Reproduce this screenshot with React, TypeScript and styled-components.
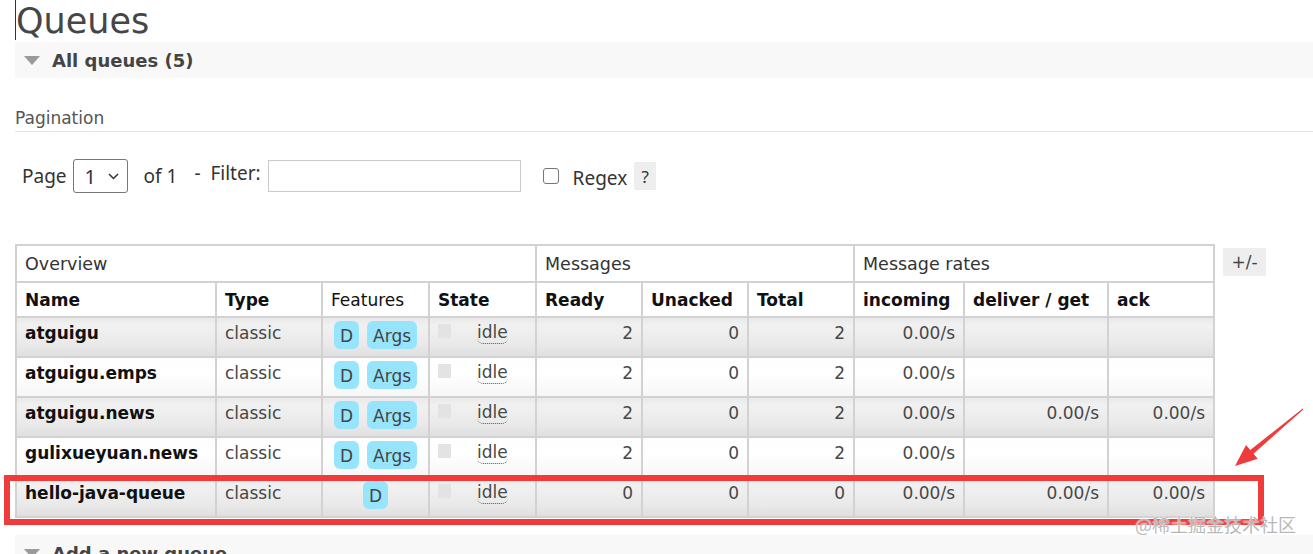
import React from "react";
import styled, { createGlobalStyle } from "styled-components";

const GlobalStyle = createGlobalStyle`
  html, body {
    margin: 0;
    padding: 0;
    background: #ffffff;
  }
  body {
    font-family: "DejaVu Sans", Verdana, sans-serif;
    color: #484848;
    overflow: hidden;
  }
`;

const PageWrapper = styled.div`
  position: relative;
  width: 1313px;
  height: 554px;
  overflow: hidden;
  padding-left: 15px;
  box-sizing: border-box;
`;

const Title = styled.h1`
  margin: 0;
  height: 42px;
  display: flex;
  font-size: 35px;
  line-height: 42px;
  font-weight: normal;
  color: #464646;
`;

const Caret = styled.span`
  width: 1px;
  height: 40px;
  background: #333;
`;

const SectionBar = styled.div`
  height: 36px;
  display: flex;
  align-items: center;
  padding-left: 9px;
  background: #f8f8f8;
  font-size: 18px;
  font-weight: bold;
  color: #444;
`;

const Toggle = styled.span`
  width: 0;
  height: 0;
  border-left: 8px solid transparent;
  border-right: 8px solid transparent;
  border-top: 9px solid #9a9a9a;
  margin-right: 12px;
`;

const SubHeading = styled.h3`
  margin: 30px 0 0;
  padding-bottom: 3px;
  font-size: 17px;
  line-height: 20px;
  font-weight: normal;
  color: #555;
  border-bottom: 1px solid #e2e2e2;
`;

const PagerRow = styled.div`
  display: flex;
  align-items: center;
  height: 34px;
  margin-top: 27px;
  padding-left: 7px;
  font-family: "Noto Sans", "DejaVu Sans", sans-serif;
  font-size: 19px;
  color: #333;
`;

const Label = styled.span<{ $gap?: number; $lift?: number }>`
  margin-left: ${(p) => p.$gap ?? 0}px;
  position: relative;
  top: ${(p) => -(p.$lift ?? 0)}px;
  white-space: pre;
`;

const FakeSelect = styled.div`
  width: 55px;
  height: 34px;
  margin-left: 6px;
  box-sizing: border-box;
  border: 1px solid #767676;
  border-radius: 3px;
  display: flex;
  align-items: center;
  justify-content: space-between;
  padding: 0 8px 0 11px;
  font-size: 20px;
`;

const FilterInput = styled.input`
  width: 253px;
  height: 32px;
  margin: 0 0 0 7px;
  box-sizing: border-box;
  border: 1px solid #cacaca;
  padding: 0 4px;
  outline: none;
`;

const Check = styled.span`
  width: 16px;
  height: 16px;
  margin-left: 22px;
  box-sizing: border-box;
  border: 1.5px solid #767676;
  border-radius: 3px;
  background: #fff;
`;

const HelpBox = styled.span`
  width: 22px;
  height: 28px;
  margin-left: 7px;
  display: flex;
  align-items: center;
  justify-content: center;
  background: #eeeeee;
  font-size: 17px;
  color: #333;
`;

const TableArea = styled.div`
  display: flex;
  align-items: flex-start;
  gap: 8px;
  margin-top: 51px;
  margin-bottom: 17px;
`;

const List = styled.table`
  border-collapse: collapse;
  table-layout: fixed;
  width: 1199px;
  font-size: 17px;
  td,
  th {
    border: 2px solid #d2d2d2;
    box-sizing: border-box;
    overflow: hidden;
    white-space: nowrap;
  }
`;

const GroupHead = styled.th`
  height: 37px;
  padding: 0 8px;
  text-align: left;
  font-size: 17.5px;
  font-weight: normal;
  color: #333;
  background: #fff;
  vertical-align: middle;
`;

const ColHead = styled.th<{ $plain?: boolean }>`
  height: 35px;
  padding: 0 8px;
  text-align: left;
  font-weight: ${(p) => (p.$plain ? "normal" : "bold")};
  color: #111;
  background: #fff;
  vertical-align: middle;
`;

const Row = styled.tr<{ $alt: boolean }>`
  background: ${(p) =>
    p.$alt
      ? "linear-gradient(to bottom, #e8e8e8 0%, #f1f1f1 22%, #e9e9e9 70%, #dfdfdf 100%)"
      : "linear-gradient(to bottom, #fdfdfd 0%, #ffffff 40%, #f6f6f6 100%)"};
`;

const Cell = styled.td<{ $num?: boolean }>`
  height: 40px;
  padding: 4px 8px 0;
  line-height: 22px;
  vertical-align: top;
  text-align: ${(p) => (p.$num ? "right" : "left")};
  color: #484848;
`;

const NameCell = styled(Cell)`
  font-weight: bold;
  color: #111;
`;

const FeatureCell = styled.td`
  height: 40px;
  padding: 3px 0 0;
  vertical-align: top;
`;

const Badges = styled.div`
  display: flex;
  justify-content: center;
  gap: 8px;
`;

const Badge = styled.span`
  height: 28px;
  padding: 2px 6px 0;
  box-sizing: border-box;
  display: flex;
  align-items: center;
  border-radius: 6px;
  background: #97e5fc;
  color: #444;
`;

const StateCell = styled(Cell)`
  padding-left: 8px;
`;

const StateWrap = styled.div`
  display: flex;
  align-items: flex-start;
`;

const StatusSquare = styled.span`
  width: 13px;
  height: 14px;
  margin-top: 2px;
  background: #e3e3e3;
`;

const Status = styled.span`
  margin-left: 26px;
  line-height: 21px;
  border-bottom: 1px dotted #555;
  border-radius: 0 0 6px 6px;
`;

const ToggleColumns = styled.div`
  width: 43px;
  height: 28px;
  margin-top: 4px;
  display: flex;
  align-items: center;
  justify-content: center;
  background: #eeeeee;
  font-size: 17px;
  color: #444;
`;

const Overlay = styled.svg`
  position: absolute;
  left: 0;
  top: 0;
  pointer-events: none;
`;

const Watermark = styled.div`
  position: absolute;
  left: 1135px;
  top: 512px;
  font-family: "Noto Sans CJK SC", "Noto Sans", sans-serif;
  font-size: 18px;
  line-height: 24px;
  color: rgba(160, 160, 160, 0.75);
  text-shadow: 0 0 1px #fff, 0 0 2px #fff;
  pointer-events: none;
`;

type Queue = {
  name: string;
  args: boolean;
  ready: number;
  unacked: number;
  total: number;
  incoming: string;
  deliver: string;
  ack: string;
};

const queues: Queue[] = [
  { name: "atguigu", args: true, ready: 2, unacked: 0, total: 2, incoming: "0.00/s", deliver: "", ack: "" },
  { name: "atguigu.emps", args: true, ready: 2, unacked: 0, total: 2, incoming: "0.00/s", deliver: "", ack: "" },
  { name: "atguigu.news", args: true, ready: 2, unacked: 0, total: 2, incoming: "0.00/s", deliver: "0.00/s", ack: "0.00/s" },
  { name: "gulixueyuan.news", args: true, ready: 2, unacked: 0, total: 2, incoming: "0.00/s", deliver: "", ack: "" },
  { name: "hello-java-queue", args: false, ready: 0, unacked: 0, total: 0, incoming: "0.00/s", deliver: "0.00/s", ack: "0.00/s" },
];

const colWidths = [200, 106, 107, 107, 106, 106, 106, 110, 144, 106];

export default function App() {
  return (
    <PageWrapper>
      <GlobalStyle />
      <Title>
        <Caret />
        Queues
      </Title>
      <SectionBar>
        <Toggle />
        All queues (5)
      </SectionBar>

      <SubHeading>Pagination</SubHeading>
      <PagerRow>
        <Label>Page</Label>
        <FakeSelect>
          <span>1</span>
          <svg width="11" height="7" viewBox="0 0 11 7">
            <polyline points="1,1 5.5,5.5 10,1" fill="none" stroke="#333" strokeWidth="1.5" />
          </svg>
        </FakeSelect>
        <Label $gap={16}>of 1</Label>
        <Label $gap={17} $lift={3}>-  Filter:</Label>
        <FilterInput type="text" />
        <Check />
        <Label $gap={14} $lift={-2}>Regex</Label>
        <HelpBox>?</HelpBox>
      </PagerRow>

      <TableArea>
        <List>
          <colgroup>
            {colWidths.map((w, i) => (
              <col key={i} style={{ width: w }} />
            ))}
          </colgroup>
          <thead>
            <tr>
              <GroupHead colSpan={4}>Overview</GroupHead>
              <GroupHead colSpan={3}>Messages</GroupHead>
              <GroupHead colSpan={3}>Message rates</GroupHead>
            </tr>
            <tr>
              <ColHead>Name</ColHead>
              <ColHead>Type</ColHead>
              <ColHead $plain>Features</ColHead>
              <ColHead>State</ColHead>
              <ColHead>Ready</ColHead>
              <ColHead>Unacked</ColHead>
              <ColHead>Total</ColHead>
              <ColHead>incoming</ColHead>
              <ColHead>deliver / get</ColHead>
              <ColHead>ack</ColHead>
            </tr>
          </thead>
          <tbody>
            {queues.map((q, i) => (
              <Row key={q.name} $alt={i % 2 === 0}>
                <NameCell>{q.name}</NameCell>
                <Cell>classic</Cell>
                <FeatureCell>
                  <Badges>
                    <Badge>D</Badge>
                    {q.args && <Badge>Args</Badge>}
                  </Badges>
                </FeatureCell>
                <StateCell>
                  <StateWrap>
                    <StatusSquare />
                    <Status>idle</Status>
                  </StateWrap>
                </StateCell>
                <Cell $num>{q.ready}</Cell>
                <Cell $num>{q.unacked}</Cell>
                <Cell $num>{q.total}</Cell>
                <Cell $num>{q.incoming}</Cell>
                <Cell $num>{q.deliver}</Cell>
                <Cell $num>{q.ack}</Cell>
              </Row>
            ))}
          </tbody>
        </List>
        <ToggleColumns>+/-</ToggleColumns>
      </TableArea>

      <SectionBar>
        <Toggle />
        Add a new queue
      </SectionBar>

      <Overlay width="1313" height="554" viewBox="0 0 1313 554">
        <rect x="7" y="478" width="1254" height="44" fill="none" stroke="#ef3b3b" strokeWidth="6" />
        <polygon
          points="1235,466 1246,445 1250.3,450 1302.7,408.6 1303.3,409.4 1253.5,453.8 1257.7,458.8"
          fill="#ef3b3b"
        />
      </Overlay>
      <Watermark>@稀土掘金技术社区</Watermark>
    </PageWrapper>
  );
}
